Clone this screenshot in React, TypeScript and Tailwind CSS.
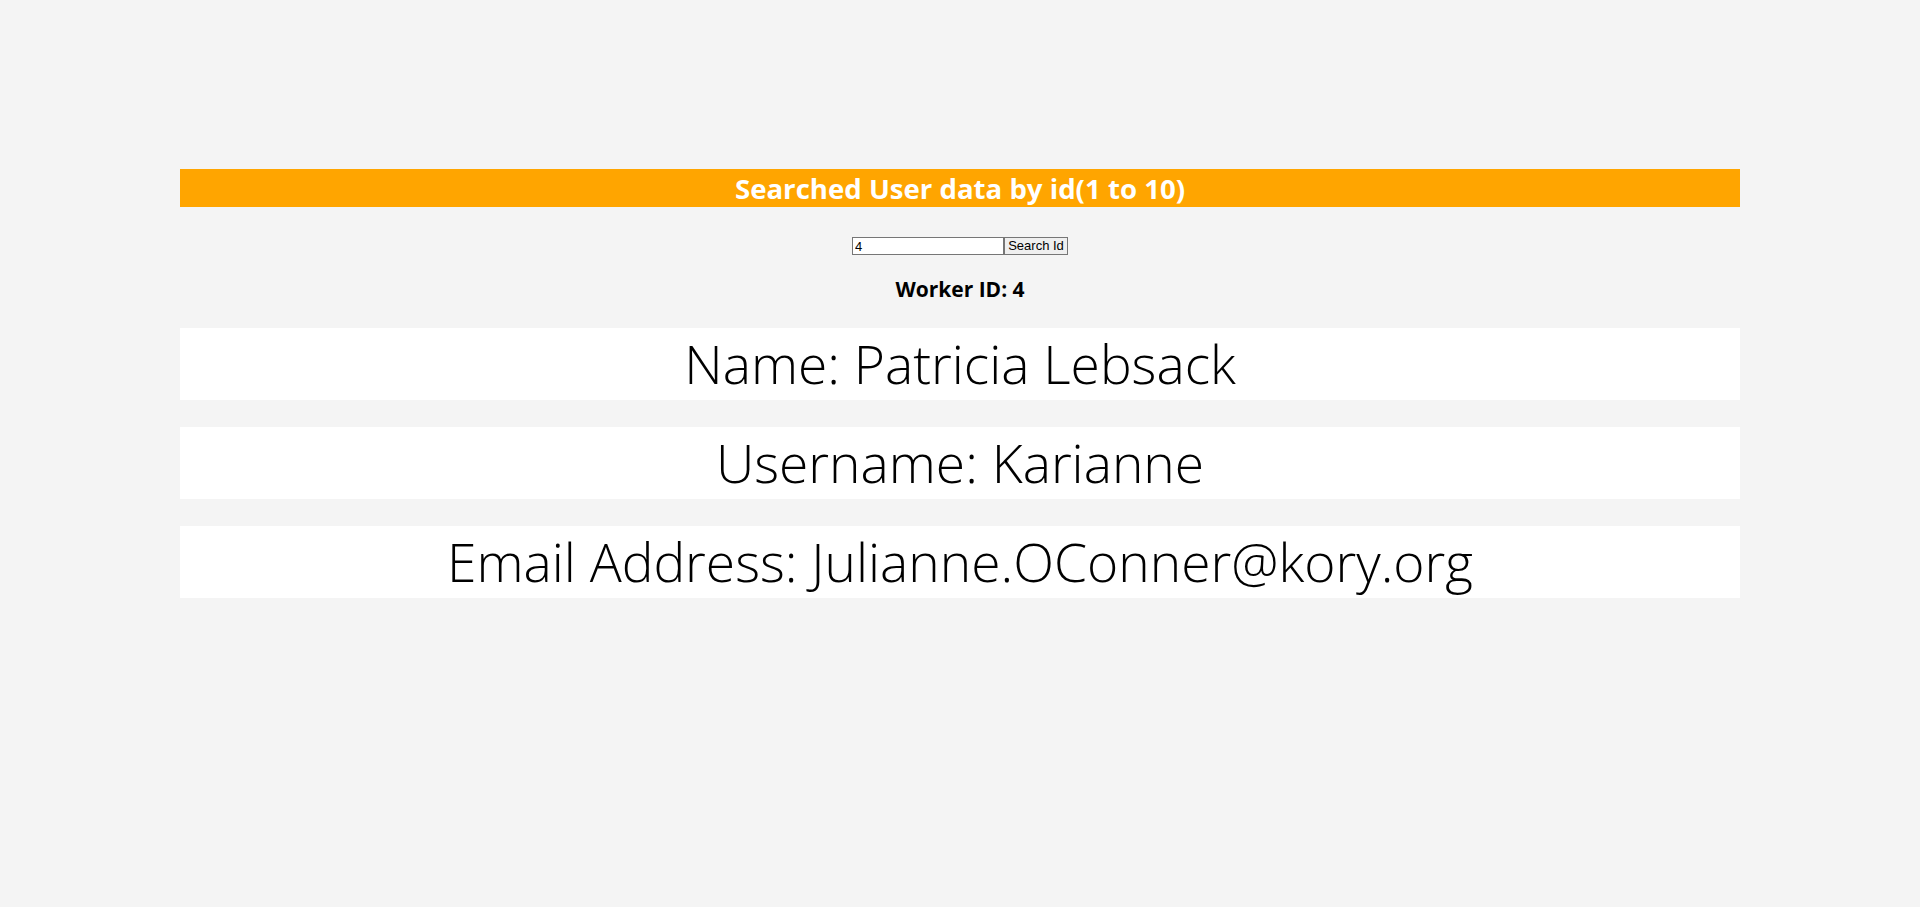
export default function App() {
  const fields = [
    { label: 'Name', value: 'Patricia Lebsack' },
    { label: 'Username', value: 'Karianne' },
    { label: 'Email Address', value: 'Julianne.OConner@kory.org' },
  ]

  return (
    <div className="min-h-screen bg-[#f4f4f4] pt-[169px] font-['Open_Sans',sans-serif]">
      <div className="mx-[180px]">
        <h1 className="bg-[#ffa500] text-center text-[27.6px] font-bold leading-[38px] text-white">
          Searched User data by id(1 to 10)
        </h1>

        <form className="mt-[30px] flex justify-center" onSubmit={(e) => e.preventDefault()}>
          <input
            type="text"
            defaultValue="4"
            className="h-[18px] w-[152px] border border-[#767676] bg-white px-[2px] font-['Liberation_Sans',sans-serif] text-[13px] leading-none text-black outline-none"
          />
          <button
            type="submit"
            className="h-[18px] w-[64px] border border-[#767676] bg-[#efefef] pb-[1px] font-['Liberation_Sans',sans-serif] text-[13px] leading-none text-black"
          >
            Search Id
          </button>
        </form>

        <h3 className="mt-[20px] text-center text-[21px] font-bold leading-[28px] text-black">Worker ID: 4</h3>

        <div className="mt-[25px] flex flex-col gap-[27px]">
          {fields.map((f) => (
            <div key={f.label} className="h-[72px] bg-white text-center text-[53.3px] font-light leading-[72px] text-black">
              {f.label}: {f.value}
            </div>
          ))}
        </div>
      </div>
    </div>
  )
}
